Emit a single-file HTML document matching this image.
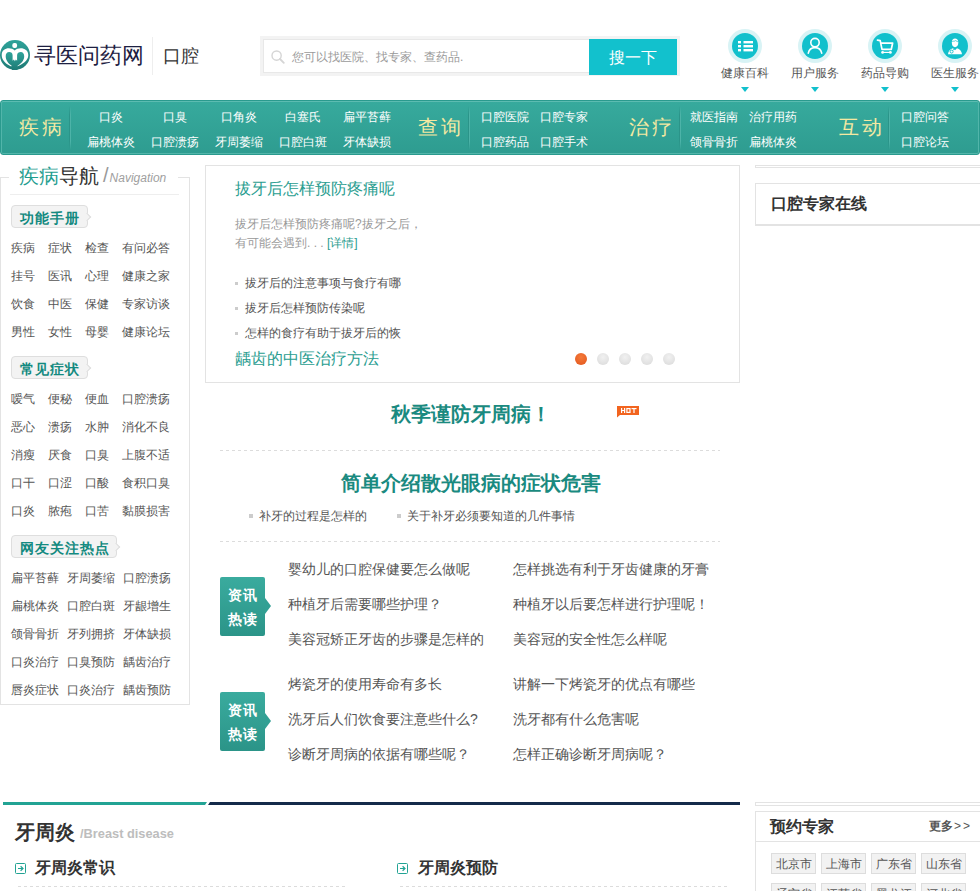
<!DOCTYPE html>
<html><head><meta charset="utf-8">
<style>
*{margin:0;padding:0;box-sizing:border-box}
html,body{width:980px;height:891px;overflow:hidden;background:#fff}
body{font-family:"Liberation Sans",sans-serif;font-size:12px;color:#555;position:relative}
.a{position:absolute;white-space:nowrap}
/* header */
.logo{left:0;top:40px;width:30px;height:30px;border-radius:50%;background:linear-gradient(#32a49b,#1f7d77)}
.brand{left:34px;top:40px;font-size:22px;line-height:32px;color:#1d2042}
.hsep{left:152px;top:37px;width:1px;height:38px;background:#eee}
.kq{left:163px;top:41px;font-size:18px;line-height:30px;color:#333}
.sbox{left:260px;top:36px;width:420px;height:40px;background:#f3f3f3}
.sfield{left:263px;top:39px;width:327px;height:34px;background:#fff;border:1px solid #e8e8e8}
.sph{left:292px;top:49px;font-size:12px;line-height:16px;color:#9a9a9a}
.sbtn{left:589px;top:39px;width:88px;height:36px;background:#12c1cd;color:#fff;font-size:16px;line-height:38px;text-align:center}
.ic{width:34px;height:34px;border-radius:50%;background:#d8f3f5;top:29px}
.ic i{position:absolute;left:4px;top:4px;width:26px;height:26px;border-radius:50%;background:#12c0cc}
.ic svg{position:absolute;left:4px;top:4px}
.il{top:65px;width:70px;text-align:center;font-size:12px;line-height:16px;color:#555}
.tri{top:87px;width:0;height:0;border-left:4.5px solid transparent;border-right:4.5px solid transparent;border-top:5px solid #12c0cc}
/* nav */
.nav{left:0;top:100px;width:980px;height:55px;border-radius:3px;background:linear-gradient(#37aa9d,#2e9c90);border:1px solid #2a9a8e;box-shadow:inset 0 1px 0 #5cbcb1,inset 0 -1px 0 #52b5aa,inset 1px 0 0 #52b5aa,inset -1px 0 0 #52b5aa}
.nt{font-size:20px;line-height:24px;color:#f4e9a2;letter-spacing:3px;top:115px}
.ns{top:106px;width:2px;height:44px;background:linear-gradient(90deg,#2b9489 50%,#4db3a8 50%);-webkit-mask:linear-gradient(transparent,#000 20%,#000 80%,transparent)}
.nl{font-size:12px;line-height:16px;color:#fff}
.nc{width:64px;text-align:center}
/* sidebar */
.sb{left:0;top:177px;width:190px;height:528px;border:1px solid #e3e3e3}
.sbgap{left:9px;top:170px;width:169px;height:10px;background:#fff}
.sbt{left:19px;top:162px;font-size:20px;line-height:28px;color:#333}
.sbt b{font-weight:normal;color:#1f9d8f}
.sbt em{font-size:12px;color:#a0a0a0;margin-left:4px;position:relative;top:-1px}
.sbt em span{font-size:20px;font-style:normal;color:#999;font-weight:lighter;margin-right:1px}
.sbl{left:10px;top:194px;width:169px;height:1px;background:#eee}
.tag{height:23px;border:1px solid #dedede;border-radius:4px;background:#f3f3f3;font-size:14px;font-weight:bold;color:#138a80;line-height:24px;padding-left:8px;letter-spacing:1px}
.tag:after{content:"";position:absolute;right:-3px;top:8px;width:5px;height:5px;background:#f3f3f3;border-right:1px solid #dedede;border-top:1px solid #dedede;transform:rotate(45deg)}
.gl{font-size:12px;line-height:16px;color:#555}

/* middle */
.slide{left:205px;top:165px;width:535px;height:218px;border:1px solid #e3e3e3}
.st{font-size:16px;line-height:20px;color:#2a9d90}
.sd{font-size:12px;line-height:19px;color:#999}
.sd a{color:#2a9d90;text-decoration:none}
.sli{font-size:12px;line-height:16px;color:#555;padding-left:10px}
.sli:before{content:"";position:absolute;left:0;top:7px;width:3px;height:3px;background:#ccc}
.dot{top:353px;width:12px;height:12px;border-radius:50%;background:radial-gradient(circle at 50% 35%,#f1f1f1,#d9d9d9)}
.hl{font-size:20px;line-height:24px;font-weight:bold;color:#1a8a80}
.hot{left:617px;top:406px;width:22px;height:10px;background:#ef6a2b;color:#fff;font-size:8px;line-height:10px;font-weight:bold;text-align:center;font-family:"Liberation Sans",sans-serif}
.dash{left:220px;width:500px;height:1px;background:repeating-linear-gradient(90deg,#dcdcdc 0 3px,transparent 3px 6px)}
.bli{font-size:12px;line-height:16px;color:#555;padding-left:10px}
.bli:before{content:"";position:absolute;left:0;top:6px;width:4px;height:4px;background:#ccc}
.zx{width:45px;height:59px;border-radius:2px;background:linear-gradient(#3aab9e,#2b9488);color:#fff;font-weight:bold;font-size:14px;line-height:24px;text-align:center;padding-top:6px;padding-left:1px;letter-spacing:1px;white-space:normal}
.zx:after{content:"";position:absolute;right:-6px;top:21px;width:0;height:0;border-top:8px solid transparent;border-bottom:8px solid transparent;border-left:6px solid #32a094}
.zl{font-size:14px;line-height:18px;color:#555}
/* bottom */
.bar1{left:3px;top:802px;width:204px;height:3px;background:#22a394;clip-path:polygon(0 0,100% 0,calc(100% - 2px) 100%,0 100%)}
.bar2{left:208px;top:802px;width:532px;height:3px;background:#142a4a;clip-path:polygon(2px 0,100% 0,100% 100%,0 100%)}
.bt{font-size:20px;line-height:24px;font-weight:bold;color:#333}
.bt span{font-size:12.8px;color:#bdbdbd;margin-left:5px;position:relative;top:-1px}
.sub{font-size:16px;line-height:20px;font-weight:bold;color:#333;padding-left:21px}

/* right */
.rl{left:755px;width:226px;height:3px;border:1px solid #e3e3e3}
.rbox{left:755px;width:226px;border:1px solid #e3e3e3;border-bottom:2px solid #e3e3e3}
.rt{font-size:16px;line-height:20px;font-weight:bold;color:#333}
.ctag{top:853px;width:45px;height:21px;border:1px solid #ddd;background:#f2f2f2;font-size:12px;line-height:20px;text-align:center;color:#555}
</style></head><body>

<!-- header -->
<svg class="a" style="left:0;top:40px" width="30" height="30" viewBox="0 0 30 30"><defs><linearGradient id="lg" x1="0" y1="0" x2="0" y2="1"><stop offset="0" stop-color="#2fa39a"/><stop offset="1" stop-color="#1e7b76"/></linearGradient></defs><circle cx="15" cy="15" r="15" fill="url(#lg)"/><rect x="12.3" y="3" width="4.8" height="5" rx="2" fill="#fff"/><path d="M14.7 10.4C11 6.8 1.6 7.2 1.7 15.2C1.8 20.6 6.5 24.3 11.2 26.4L15 23.5L16.8 26.6C22 24.5 28.4 20.8 28.3 15.2C28.2 7.2 18.5 6.8 14.7 10.4Z" fill="#fff"/><path d="M12.6 20.8L12.6 15.2C12.6 13.2 11.2 12 9.2 12C6.9 12 5.7 13.8 5.7 16.2C5.7 20.5 8.6 23.5 11.5 25.6L12 30L17.5 30L17.6 25.8C20.8 23.5 24.2 20.8 24.2 16.2C24.2 13.8 22.9 12 20.8 12C18.8 12 17.1 13.2 17.1 15.2L17.1 20.8L15.8 19.6L14.9 21.2L13.9 19.6Z" fill="url(#lg)"/></svg>
<div class="a brand">寻医问药网</div>
<div class="a hsep"></div>
<div class="a kq">口腔</div>
<div class="a sbox"></div>
<div class="a sfield"></div>
<svg class="a" style="left:271px;top:50px" width="14" height="14" viewBox="0 0 14 14"><circle cx="5.6" cy="5.6" r="4.6" fill="none" stroke="#d5d5d5" stroke-width="1.4"/><path d="M9 9L12.8 12.8" stroke="#d5d5d5" stroke-width="1.8" stroke-linecap="round"/></svg>
<div class="a sph">您可以找医院、找专家、查药品.</div>
<div class="a sbtn">搜一下</div>

<div class="a ic" style="left:728px"><i></i><svg width="26" height="26" viewBox="0 0 26 26"><rect x="6" y="8" width="3" height="2.4" fill="#fff"/><rect x="6" y="12" width="3" height="2.4" fill="#fff"/><rect x="6" y="16" width="3" height="2.4" fill="#fff"/><rect x="11.5" y="8" width="9.5" height="2.4" fill="#fff"/><rect x="11.5" y="12" width="9.5" height="2.4" fill="#fff"/><rect x="11.5" y="16" width="9.5" height="2.4" fill="#fff"/></svg></div>
<div class="a ic" style="left:798px"><i></i><svg width="26" height="26" viewBox="0 0 26 26"><circle cx="13" cy="9.6" r="4.2" fill="none" stroke="#fff" stroke-width="1.6"/><path d="M6.3 20.2C7 16.6 9.6 14.6 13 14.6C16.4 14.6 19 16.6 19.7 20.2" fill="none" stroke="#fff" stroke-width="1.6" stroke-linecap="round"/></svg></div>
<div class="a ic" style="left:868px"><i></i><svg width="26" height="26" viewBox="0 0 26 26"><path d="M5.5 7.2L8.2 7.6L10 16.3L19.3 16.3L20.6 10.2L9 10.2" fill="none" stroke="#fff" stroke-width="1.7" stroke-linejoin="round" stroke-linecap="round"/><circle cx="10.6" cy="19.4" r="1.4" fill="#fff"/><circle cx="18.4" cy="19.4" r="1.4" fill="#fff"/><path d="M10.3 19.4L18.6 19.4" stroke="#fff" stroke-width="1.2"/></svg></div>
<div class="a ic" style="left:938px"><i></i><svg width="26" height="26" viewBox="0 0 26 26"><path d="M9.8 9.5C9.8 6.8 11.2 5.6 13 5.6C14.9 5.6 16.3 6.8 16.3 9.5C16.3 12.4 14.8 14.2 13 14.2C11.2 14.2 9.8 12.4 9.8 9.5Z" fill="#fff"/><path d="M10.3 8.6C11.2 7.8 12.6 8.6 13.6 7.6C14.4 8.4 15.6 8.4 15.9 8.8" fill="none" stroke="#12c0cc" stroke-width="0.7"/><path d="M6 21.3C6.3 17.8 8.4 15.8 11 15.2L13 17.3L15 15.2C17.6 15.8 19.7 17.8 20 21.3Z" fill="#fff"/><circle cx="9.6" cy="18.6" r="1.5" fill="none" stroke="#12c0cc" stroke-width="0.9"/><path d="M10.8 17.5L12.2 16" stroke="#12c0cc" stroke-width="0.8"/></svg></div>
<div class="a il" style="left:710px">健康百科</div>
<div class="a il" style="left:780px">用户服务</div>
<div class="a il" style="left:850px">药品导购</div>
<div class="a il" style="left:920px">医生服务</div>
<div class="a tri" style="left:741px"></div>
<div class="a tri" style="left:811px"></div>
<div class="a tri" style="left:881px"></div>
<div class="a tri" style="left:951px"></div>

<!-- nav -->
<div class="a nav"></div>
<div class="a nt" style="left:19px">疾病</div>
<div class="a ns" style="left:69px"></div>
<div class="a nt" style="left:418px">查询</div>
<div class="a ns" style="left:468px"></div>
<div class="a nt" style="left:629px">治疗</div>
<div class="a ns" style="left:679px"></div>
<div class="a nt" style="left:839px">互动</div>
<div class="a ns" style="left:888px"></div>

<div class="a nl nc" style="left:79px;top:109px">口炎</div>
<div class="a nl nc" style="left:143px;top:109px">口臭</div>
<div class="a nl nc" style="left:207px;top:109px">口角炎</div>
<div class="a nl nc" style="left:271px;top:109px">白塞氏</div>
<div class="a nl nc" style="left:335px;top:109px">扁平苔藓</div>
<div class="a nl nc" style="left:79px;top:134px">扁桃体炎</div>
<div class="a nl nc" style="left:143px;top:134px">口腔溃疡</div>
<div class="a nl nc" style="left:207px;top:134px">牙周萎缩</div>
<div class="a nl nc" style="left:271px;top:134px">口腔白斑</div>
<div class="a nl nc" style="left:335px;top:134px">牙体缺损</div>

<div class="a nl" style="left:481px;top:109px">口腔医院</div>
<div class="a nl" style="left:540px;top:109px">口腔专家</div>
<div class="a nl" style="left:481px;top:134px">口腔药品</div>
<div class="a nl" style="left:540px;top:134px">口腔手术</div>
<div class="a nl" style="left:690px;top:109px">就医指南</div>
<div class="a nl" style="left:749px;top:109px">治疗用药</div>
<div class="a nl" style="left:690px;top:134px">颌骨骨折</div>
<div class="a nl" style="left:749px;top:134px">扁桃体炎</div>
<div class="a nl" style="left:901px;top:109px">口腔问答</div>
<div class="a nl" style="left:901px;top:134px">口腔论坛</div>

<!-- sidebar -->
<div class="a sb"></div>
<div class="a sbgap"></div>
<div class="a sbt"><b>疾病</b>导航<em><span>/</span>Navigation</em></div>
<div class="a sbl"></div>

<div class="a tag" style="left:11px;top:205px;width:77px">功能手册</div>
<div class="a gl" style="left:11px;top:240px">疾病</div><div class="a gl" style="left:48px;top:240px">症状</div><div class="a gl" style="left:85px;top:240px">检查</div><div class="a gl" style="left:122px;top:240px">有问必答</div>
<div class="a gl" style="left:11px;top:268px">挂号</div><div class="a gl" style="left:48px;top:268px">医讯</div><div class="a gl" style="left:85px;top:268px">心理</div><div class="a gl" style="left:122px;top:268px">健康之家</div>
<div class="a gl" style="left:11px;top:296px">饮食</div><div class="a gl" style="left:48px;top:296px">中医</div><div class="a gl" style="left:85px;top:296px">保健</div><div class="a gl" style="left:122px;top:296px">专家访谈</div>
<div class="a gl" style="left:11px;top:324px">男性</div><div class="a gl" style="left:48px;top:324px">女性</div><div class="a gl" style="left:85px;top:324px">母婴</div><div class="a gl" style="left:122px;top:324px">健康论坛</div>

<div class="a tag" style="left:11px;top:356px;width:77px">常见症状</div>
<div class="a gl" style="left:11px;top:391px">嗳气</div><div class="a gl" style="left:48px;top:391px">便秘</div><div class="a gl" style="left:85px;top:391px">便血</div><div class="a gl" style="left:122px;top:391px">口腔溃疡</div>
<div class="a gl" style="left:11px;top:419px">恶心</div><div class="a gl" style="left:48px;top:419px">溃疡</div><div class="a gl" style="left:85px;top:419px">水肿</div><div class="a gl" style="left:122px;top:419px">消化不良</div>
<div class="a gl" style="left:11px;top:447px">消瘦</div><div class="a gl" style="left:48px;top:447px">厌食</div><div class="a gl" style="left:85px;top:447px">口臭</div><div class="a gl" style="left:122px;top:447px">上腹不适</div>
<div class="a gl" style="left:11px;top:475px">口干</div><div class="a gl" style="left:48px;top:475px">口涩</div><div class="a gl" style="left:85px;top:475px">口酸</div><div class="a gl" style="left:122px;top:475px">食积口臭</div>
<div class="a gl" style="left:11px;top:503px">口炎</div><div class="a gl" style="left:48px;top:503px">脓疱</div><div class="a gl" style="left:85px;top:503px">口苦</div><div class="a gl" style="left:122px;top:503px">黏膜损害</div>

<div class="a tag" style="left:11px;top:535px;width:106px">网友关注热点</div>
<div class="a gl" style="left:11px;top:570px">扁平苔藓</div><div class="a gl" style="left:67px;top:570px">牙周萎缩</div><div class="a gl" style="left:123px;top:570px">口腔溃疡</div>
<div class="a gl" style="left:11px;top:598px">扁桃体炎</div><div class="a gl" style="left:67px;top:598px">口腔白斑</div><div class="a gl" style="left:123px;top:598px">牙龈增生</div>
<div class="a gl" style="left:11px;top:626px">颌骨骨折</div><div class="a gl" style="left:67px;top:626px">牙列拥挤</div><div class="a gl" style="left:123px;top:626px">牙体缺损</div>
<div class="a gl" style="left:11px;top:654px">口炎治疗</div><div class="a gl" style="left:67px;top:654px">口臭预防</div><div class="a gl" style="left:123px;top:654px">龋齿治疗</div>
<div class="a gl" style="left:11px;top:682px">唇炎症状</div><div class="a gl" style="left:67px;top:682px">口炎治疗</div><div class="a gl" style="left:123px;top:682px">龋齿预防</div>


<div class="a slide"></div>
<div class="a st" style="left:235px;top:179px">拔牙后怎样预防疼痛呢</div>
<div class="a sd" style="left:235px;top:215px">拔牙后怎样预防疼痛呢?拔牙之后，<br>有可能会遇到. . . <a>[详情]</a></div>
<div class="a sli" style="left:235px;top:275px">拔牙后的注意事项与食疗有哪</div>
<div class="a sli" style="left:235px;top:300px">拔牙后怎样预防传染呢</div>
<div class="a sli" style="left:235px;top:325px">怎样的食疗有助于拔牙后的恢</div>
<div class="a st" style="left:235px;top:349px">龋齿的中医治疗方法</div>
<div class="a dot" style="left:575px;background:radial-gradient(circle at 50% 35%,#f47a3a,#e2551c)"></div>
<div class="a dot" style="left:597px"></div>
<div class="a dot" style="left:619px"></div>
<div class="a dot" style="left:641px"></div>
<div class="a dot" style="left:663px"></div>

<div class="a hl" style="left:391px;top:402px">秋季谨防牙周病！</div>
<svg class="a" style="left:617px;top:406px" width="23" height="12" viewBox="0 0 23 12"><path d="M0 0H22V9H3L0 11.5Z" fill="#f2641f"/><g fill="#fff"><rect x="4" y="2" width="1.2" height="5"/><rect x="7" y="2" width="1.2" height="5"/><rect x="4" y="4" width="4" height="1"/><rect x="9.3" y="2" width="4.3" height="5"/><rect x="14.5" y="2" width="5" height="1.2"/><rect x="16.4" y="2" width="1.2" height="5"/></g><rect x="10.5" y="3.2" width="1.9" height="2.6" fill="#f2641f"/></svg>
<div class="a dash" style="top:450px"></div>
<div class="a hl" style="left:341px;top:471px">简单介绍散光眼病的症状危害</div>
<div class="a bli" style="left:249px;top:508px">补牙的过程是怎样的</div>
<div class="a bli" style="left:397px;top:508px">关于补牙必须要知道的几件事情</div>
<div class="a dash" style="top:541px"></div>

<div class="a zx" style="left:220px;top:577px">资讯<br>热读</div>
<div class="a zl" style="left:288px;top:560px">婴幼儿的口腔保健要怎么做呢</div>
<div class="a zl" style="left:288px;top:595px">种植牙后需要哪些护理？</div>
<div class="a zl" style="left:288px;top:630px">美容冠矫正牙齿的步骤是怎样的</div>
<div class="a zl" style="left:513px;top:560px">怎样挑选有利于牙齿健康的牙膏</div>
<div class="a zl" style="left:513px;top:595px">种植牙以后要怎样进行护理呢！</div>
<div class="a zl" style="left:513px;top:630px">美容冠的安全性怎么样呢</div>

<div class="a zx" style="left:220px;top:692px">资讯<br>热读</div>
<div class="a zl" style="left:288px;top:675px">烤瓷牙的使用寿命有多长</div>
<div class="a zl" style="left:288px;top:710px">洗牙后人们饮食要注意些什么?</div>
<div class="a zl" style="left:288px;top:745px">诊断牙周病的依据有哪些呢？</div>
<div class="a zl" style="left:513px;top:675px">讲解一下烤瓷牙的优点有哪些</div>
<div class="a zl" style="left:513px;top:710px">洗牙都有什么危害呢</div>
<div class="a zl" style="left:513px;top:745px">怎样正确诊断牙周病呢？</div>

<div class="a bar1"></div>
<div class="a bar2"></div>
<div class="a bt" style="left:15px;top:820px">牙周炎<span>/Breast disease</span></div>
<div class="a sub" style="left:14px;top:858px">牙周炎常识</div><svg class="a" style="left:15px;top:863px" width="11" height="11" viewBox="0 0 11 11"><rect x="0.5" y="0.5" width="10" height="10" rx="1" fill="none" stroke="#22a394"/><path d="M3 5.5H8M5.6 3.2L8 5.5L5.6 7.8" fill="none" stroke="#22a394" stroke-width="1.2"/></svg>
<div class="a sub" style="left:397px;top:858px">牙周炎预防</div><svg class="a" style="left:397px;top:863px" width="11" height="11" viewBox="0 0 11 11"><rect x="0.5" y="0.5" width="10" height="10" rx="1" fill="none" stroke="#22a394"/><path d="M3 5.5H8M5.6 3.2L8 5.5L5.6 7.8" fill="none" stroke="#22a394" stroke-width="1.2"/></svg>
<div class="a dash" style="left:18px;width:327px;top:886px"></div>
<div class="a dash" style="left:400px;width:328px;top:886px"></div>

<!-- right -->
<div class="a rl" style="top:165px"></div>
<div class="a rbox" style="top:183px;height:43px"></div>
<div class="a rt" style="left:771px;top:194px">口腔专家在线</div>

<div class="a rl" style="top:802px;height:4px"></div>
<div class="a rbox" style="top:811px;height:100px;border-bottom:1px solid #e3e3e3"></div>
<div class="a" style="left:756px;top:841px;width:224px;height:1px;background:#e3e3e3"></div>
<div class="a rt" style="left:770px;top:817px">预约专家</div>
<div class="a" style="left:929px;top:818px;font-size:12px;line-height:16px;font-weight:bold;color:#555">更多<span style="font-weight:normal;letter-spacing:2px;margin-left:1px">&gt;&gt;</span></div>
<div class="a ctag" style="left:771px">北京市</div>
<div class="a ctag" style="left:821px">上海市</div>
<div class="a ctag" style="left:871px">广东省</div>
<div class="a ctag" style="left:921px">山东省</div>
<div class="a ctag" style="left:771px;top:883px">辽宁省</div>
<div class="a ctag" style="left:821px;top:883px">江苏省</div>
<div class="a ctag" style="left:871px;top:883px">黑龙江</div>
<div class="a ctag" style="left:921px;top:883px">河北省</div>

</body></html>
